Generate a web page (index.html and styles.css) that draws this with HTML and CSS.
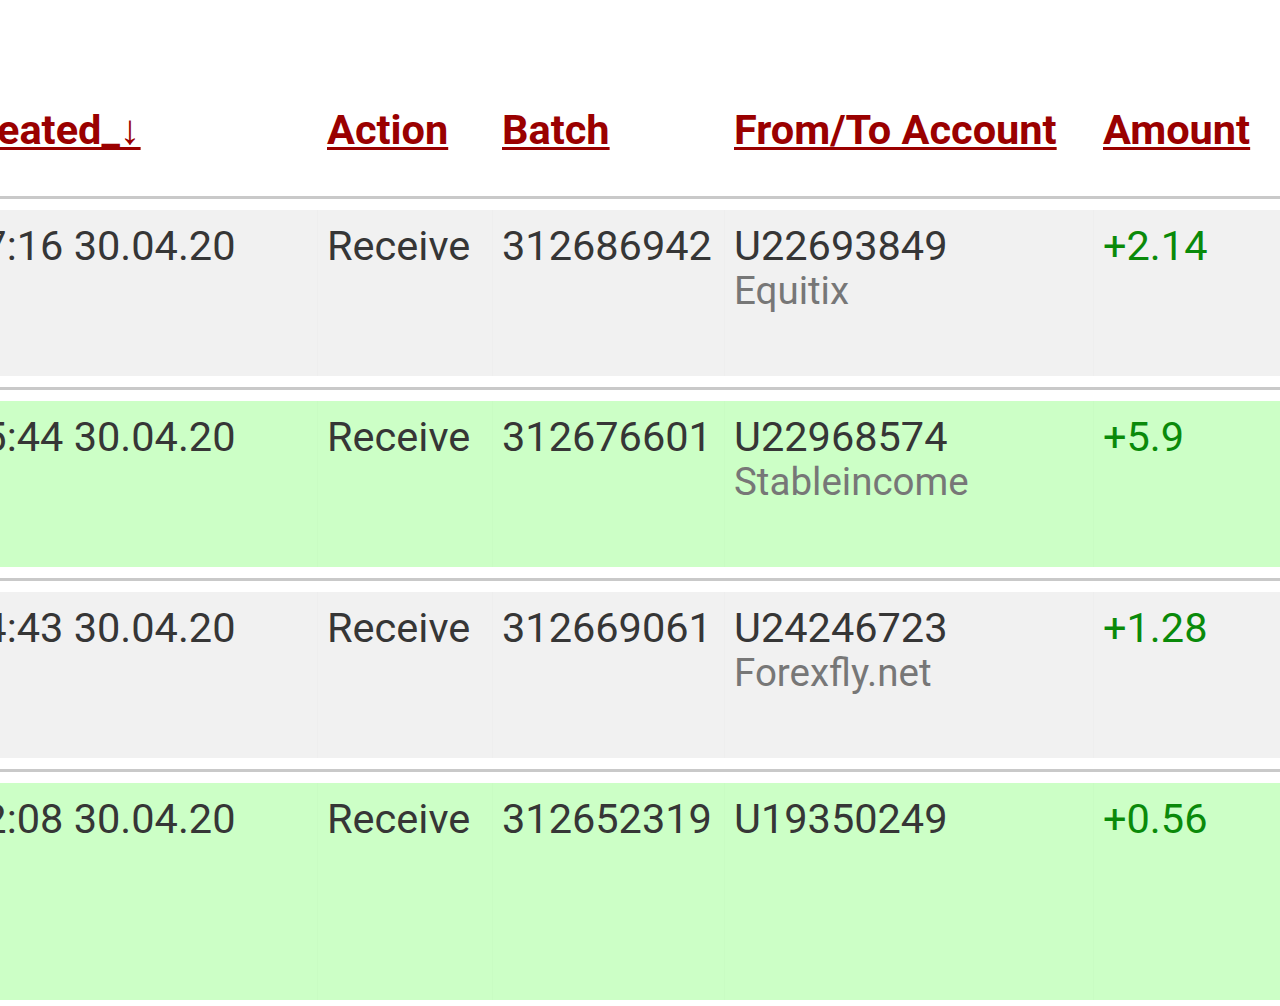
FILE: index.html
```html
<!DOCTYPE html>
<html>
<head>
<meta charset="utf-8">
<link rel="stylesheet" href="styles.css">
</head>
<body>
<div class="table">
  <div class="head">
    <div class="th first"><a>Created_↓</a></div>
    <div class="th"><a>Action</a></div>
    <div class="th"><a>Batch</a></div>
    <div class="th"><a>From/To Account</a></div>
    <div class="th"><a>Amount</a></div>
  </div>

  <div class="row">
    <div class="cells gray">
      <div class="td">17:16 30.04.20</div>
      <div class="td">Receive</div>
      <div class="td">312686942</div>
      <div class="td">U22693849<div class="sub">Equitix</div></div>
      <div class="td amount">+2.14</div>
    </div>
  </div>

  <div class="row">
    <div class="cells green">
      <div class="td">15:44 30.04.20</div>
      <div class="td">Receive</div>
      <div class="td">312676601</div>
      <div class="td">U22968574<div class="sub">Stableincome</div></div>
      <div class="td amount">+5.9</div>
    </div>
  </div>

  <div class="row">
    <div class="cells gray">
      <div class="td">14:43 30.04.20</div>
      <div class="td">Receive</div>
      <div class="td">312669061</div>
      <div class="td">U24246723<div class="sub">Forexfly.net</div></div>
      <div class="td amount">+1.28</div>
    </div>
  </div>

  <div class="row last">
    <div class="cells green">
      <div class="td">12:08 30.04.20</div>
      <div class="td">Receive</div>
      <div class="td">312652319</div>
      <div class="td">U19350249</div>
      <div class="td amount">+0.56</div>
    </div>
  </div>
</div>
</body>
</html>
```

FILE: styles.css
```css
html, body {
  margin: 0;
  padding: 0;
  background: #ffffff;
  overflow: hidden;
}

body {
  font-family: Roboto, "Liberation Sans", sans-serif;
  font-size: 41.5px;
  line-height: 45px;
  color: #363636;
  width: 1280px;
  height: 1006px;
}

.table {
  margin-left: -50px;
  width: 1420px;
}

.head,
.cells {
  display: grid;
  grid-template-columns: 367px 175px 232px 369px 277px;
}

.head {
  height: 196px;
  box-sizing: border-box;
  padding-top: 107px;
}

.th {
  padding-left: 10px;
  font-weight: 700;
  white-space: nowrap;
}

.th.first {
  padding-left: 5px;
}

.th a {
  color: #9a0000;
  text-decoration: underline;
  text-decoration-thickness: 3px;
  text-underline-offset: 3px;
}

.row {
  border-top: 3px solid #c9c9c9;
  padding-top: 11px;
  padding-bottom: 11px;
}

.cells {
  height: 166px;
}

.row.last .cells {
  height: 217px;
}

.gray {
  background: #f1f1f1;
}

.green {
  background: #ccffc6;
}

.td {
  padding: 13px 0 0 9px;
  white-space: nowrap;
  border-left: 1px solid rgba(0, 0, 0, 0.012);
}

.td:first-child {
  border-left: none;
  padding-left: 10px;
}

.sub {
  font-size: 38.5px;
  color: #777777;
}

.amount {
  color: #0a8a0a;
}
```
